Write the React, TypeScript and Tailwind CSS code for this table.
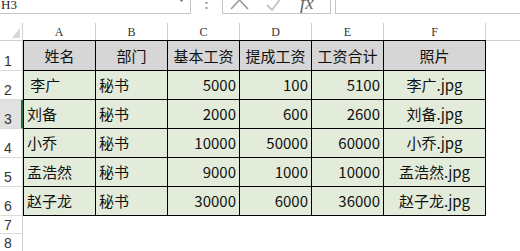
import React from "react";

const COLS = [
  { letter: "A", w: "w-[73px] border-l border-l-black", hw: "w-[73px]" },
  { letter: "B", w: "w-[72px]", hw: "w-[72px]" },
  { letter: "C", w: "w-[72px]", hw: "w-[72px]" },
  { letter: "D", w: "w-[72px]", hw: "w-[72px]" },
  { letter: "E", w: "w-[72px]", hw: "w-[72px]" },
  { letter: "F", w: "w-[102px]", hw: "w-[102px]" },
];

type Row = { n: string; cells: string[] };

const HEADER = ["姓名", "部门", "基本工资", "提成工资", "工资合计", "照片"];
const DATA: Row[] = [
  { n: "2", cells: [" 李广", "秘书", "5000", "100", "5100", "李广.jpg"] },
  { n: "3", cells: ["刘备", "秘书", "2000", "600", "2600", "刘备.jpg"] },
  { n: "4", cells: ["小乔", "秘书", "10000", "50000", "60000", "小乔.jpg"] },
  { n: "5", cells: ["孟浩然", "秘书", "9000", "1000", "10000", "孟浩然.jpg"] },
  { n: "6", cells: ["赵子龙", "秘书", "30000", "6000", "36000", "赵子龙.jpg"] },
];

const ALIGN = [
  "justify-start pl-[3px]",
  "justify-start pl-[3px]",
  "justify-end pr-[3px]",
  "justify-end pr-[3px]",
  "justify-end pr-[3px]",
  "justify-center",
];

const SANS = { fontFamily: '"Liberation Sans", Arial, sans-serif' };
const SERIF = { fontFamily: '"Liberation Serif", serif' };

function RowHeader({ n, h, active }: { n: string; h: string; active?: boolean }) {
  return (
    <div
      className={
        "w-[23px] shrink-0 flex items-end pl-[4px] text-[14px] leading-[16px] text-[#333] border-b border-b-[#dadada] " +
        h +
        (active ? " bg-[#e1e1e1] border-r-2 border-r-[#217346]" : " border-r border-r-[#d0d0d0]")
      }
      style={SANS}
    >
      {n}
    </div>
  );
}

export default function App() {
  return (
    <div
      className="w-[520px] h-[251px] overflow-hidden bg-white text-[#111]"
      style={{ fontFamily: '"Noto Sans CJK SC", "Noto Sans", sans-serif' }}
    >
      <div className="flex h-[14px] overflow-hidden">
        <div className="w-[191px] shrink-0 border-b border-r border-[#c6c6c6] flex items-end pb-[2px] pl-[1px]">
          <span className="text-[13px] leading-[13px] text-[#222]" style={SERIF}>
            H3
          </span>
          <svg className="ml-auto mr-[5px] mb-[9px]" width="7" height="4" viewBox="0 0 7 4">
            <path d="M0 0 L7 0 L3.5 4 Z" fill="#777" />
          </svg>
        </div>
        <div className="w-[31px] shrink-0 flex items-end justify-center pb-[3px]">
          <svg width="3" height="10" viewBox="0 0 3 10">
            <rect x="0.5" y="1" width="2" height="2" fill="#9a9a9a" />
            <rect x="0.5" y="6" width="2" height="2" fill="#9a9a9a" />
          </svg>
        </div>
        <div className="w-[109px] shrink-0 border-l border-r border-b border-[#c6c6c6] flex items-end pl-[7px] pb-[2px]">
          <svg width="19" height="13" viewBox="0 9 19 13">
            <path d="M1 2 L18 20 M18 2 L1 20" stroke="#9a9a9a" strokeWidth="1.6" fill="none" />
          </svg>
          <svg className="ml-[17px]" width="16" height="11" viewBox="0 5 16 11">
            <path d="M1 10 L6 15 L15 3" stroke="#c4c4c4" strokeWidth="1.8" fill="none" />
          </svg>
          <span className="ml-[18px] italic text-[19px] leading-[17px] text-[#666]" style={SERIF}>
            fx
          </span>
        </div>
        <div className="w-[4px] shrink-0" />
        <div className="flex-1 border-l border-b border-[#c6c6c6]" />
      </div>

      <div className="h-[9px]" />

      <div className="flex h-[17px]">
        <div className="w-[23px] shrink-0 border-r border-r-[#d0d0d0] flex items-end justify-end pr-[2px] pb-[2px]">
          <svg width="8" height="10" viewBox="0 0 8 10">
            <path d="M8 0 L8 10 L0 10 Z" fill="#d6d6d6" />
          </svg>
        </div>
        {COLS.map((c) => (
          <div
            key={c.letter}
            className={
              c.hw +
              " shrink-0 border-r border-r-[#d0d0d0] flex items-center justify-center text-[12px] text-[#333] leading-[14px]"
            }
            style={SERIF}
          >
            {c.letter}
          </div>
        ))}
        <div className="flex-1 flex items-center justify-center pl-[60px] text-[12px] text-[#333]" style={SERIF}>
          G
        </div>
      </div>

      <div className="flex">
        <RowHeader n="1" h="h-[31px] pb-[1px] border-t border-t-[#d0d0d0]" />
        {COLS.map((c, i) => (
          <div
            key={i}
            className={
              c.w +
              " h-[31px] shrink-0 border-t border-r border-b border-black bg-[#d6d6d6] flex items-center justify-center text-[15px] leading-[18px]"
            }
          >
            {HEADER[i]}
          </div>
        ))}
        <div className="flex-1 border-t border-t-[#d0d0d0] h-[1px]" />
      </div>

      {DATA.map((r) => (
        <div className="flex" key={r.n}>
          <RowHeader n={r.n} h="h-[29px] pb-[1px]" active={r.n === "3"} />
          {COLS.map((c, i) => (
            <div
              key={i}
              className={
                c.w +
                " h-[29px] shrink-0 border-r border-b border-black bg-[#e3ecda] flex items-center text-[15px] leading-[18px] whitespace-pre " +
                ALIGN[i]
              }
            >
              {r.cells[i]}
            </div>
          ))}
        </div>
      ))}

      <div className="flex">
        <RowHeader n="7" h="h-[18px]" />
      </div>
      <div className="flex">
        <RowHeader n="8" h="h-[18px]" />
      </div>
    </div>
  );
}
